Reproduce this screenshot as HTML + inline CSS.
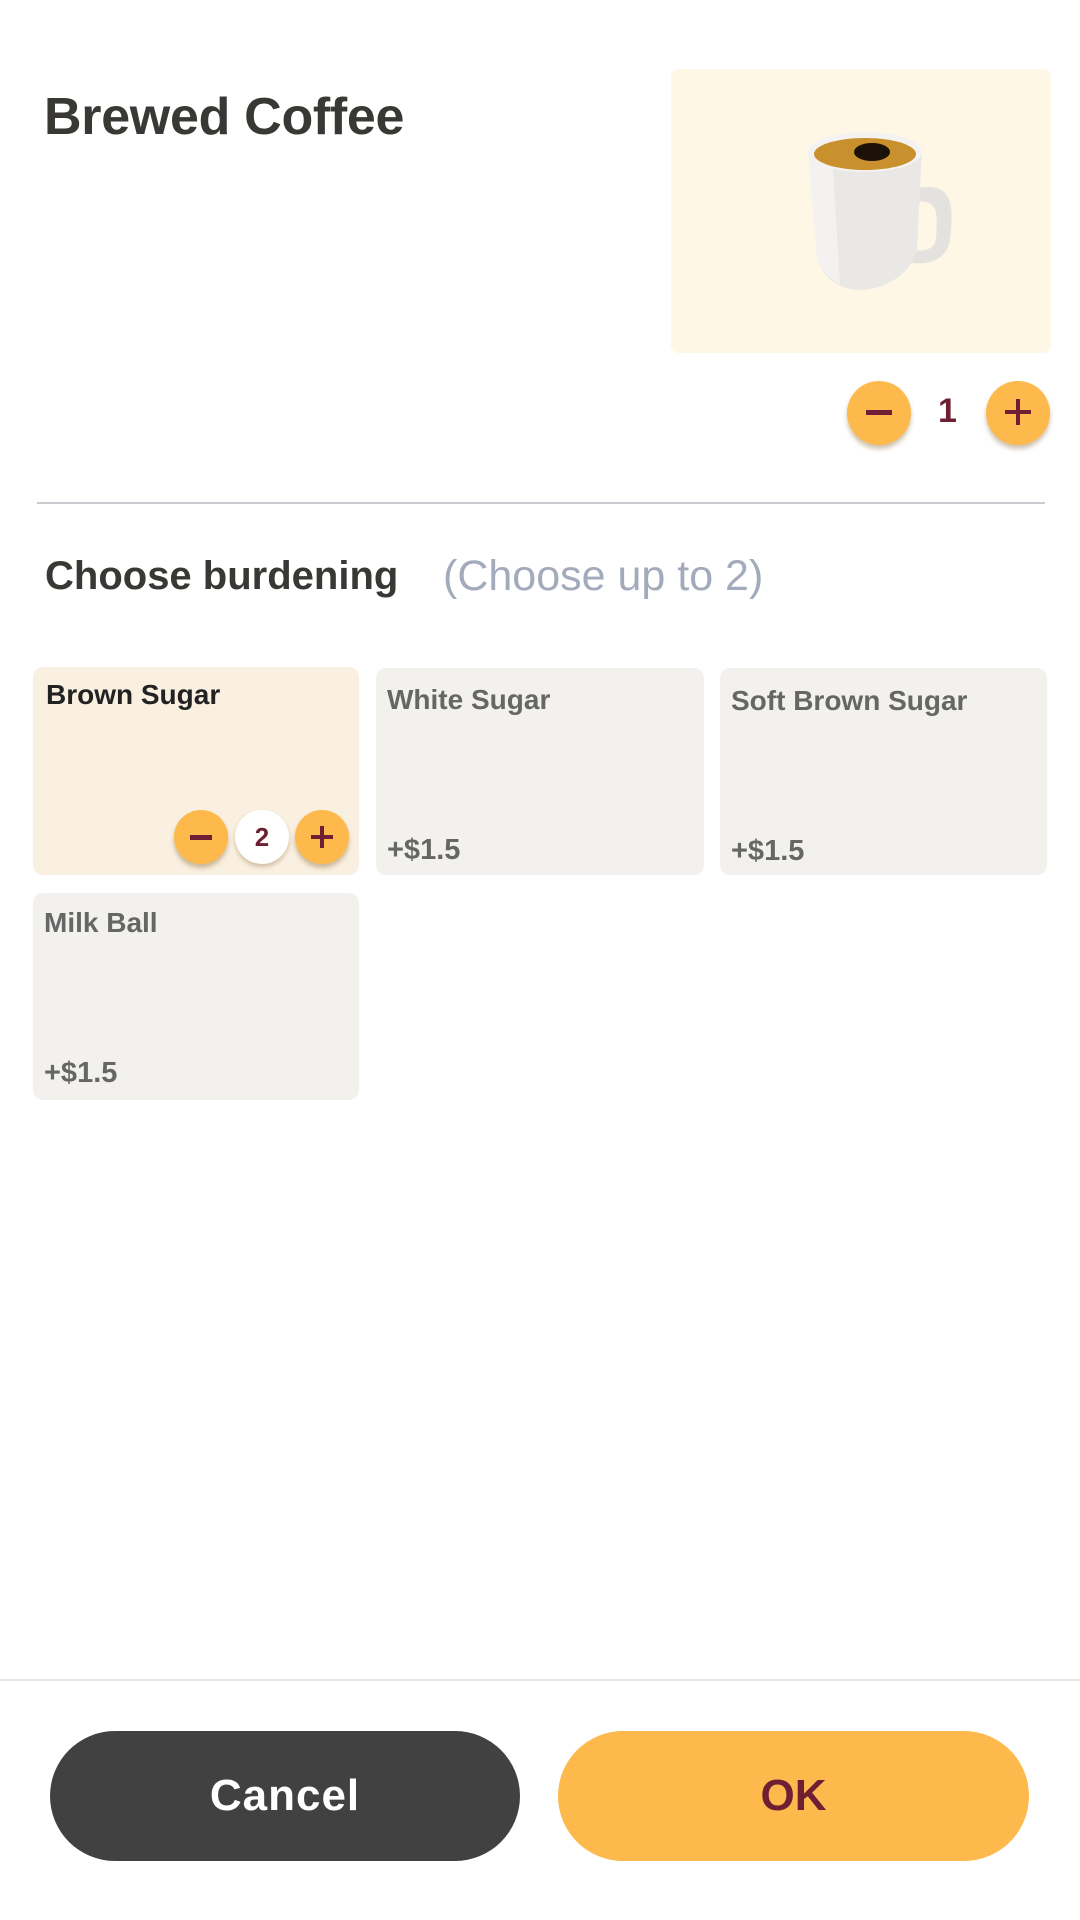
<!DOCTYPE html>
<html><head><meta charset="utf-8"><style>
*{margin:0;padding:0;box-sizing:border-box}
body{width:1080px;height:1920px;background:#fff;position:relative;font-family:"Liberation Sans",sans-serif;overflow:hidden}
.abs{position:absolute}
.circ{position:absolute;border-radius:50%;background:#fdb94b;box-shadow:0 4px 5px rgba(120,80,20,.35)}
.card{position:absolute;border-radius:10px;background:#f3f1ed}
.ct{position:absolute;left:12px;top:14px;font-size:28px;font-weight:bold;color:#666}
.cp{position:absolute;left:12px;font-size:29px;font-weight:bold;color:#666}
</style></head><body>
<div class="abs" style="left:44px;top:87px;font-size:52px;font-weight:bold;color:#3a3835;letter-spacing:-0.3px">Brewed Coffee</div>
<div class="abs" style="left:671px;top:69px;width:380px;height:284px;background:#fff7e6;border-radius:8px"></div>
<svg class="abs" style="left:790px;top:125px" width="180" height="180" viewBox="790 125 180 180">
<path d="M905 190 C950 180 955 195 950 240 C946 262 925 266 905 262 L906 250 C925 252 935 250 936 238 C939 205 935 198 908 203Z" fill="#e4e2de"/>
<path d="M808 152 L922 152 L917 250 C910 275 885 290 857 290 C835 288 822 275 817 258Z" fill="#e9e8e5"/>
<path d="M808 152 L832 154 L840 284 C828 278 820 268 817 258Z" fill="#f3f2f0"/>
<ellipse cx="865" cy="152" rx="57" ry="20" fill="#f4f3f1"/>
<ellipse cx="865" cy="154" rx="51" ry="16" fill="#c8912d"/>
<ellipse cx="872" cy="152" rx="18" ry="9" fill="#1c1208"/>
</svg>
<div class="circ" style="left:847px;top:381px;width:64px;height:64px"></div>
<div class="abs" style="left:866px;top:410px;width:26px;height:5px;background:#6e1f33"></div>
<div class="abs" style="left:920px;top:392px;width:55px;text-align:center;font-size:34px;font-weight:bold;color:#6e1f33">1</div>
<div class="circ" style="left:986px;top:381px;width:64px;height:64px"></div>
<div class="abs" style="left:1005px;top:410px;width:26px;height:4px;background:#6e1f33"></div>
<div class="abs" style="left:1016px;top:399px;width:4px;height:26px;background:#6e1f33"></div>
<div class="abs" style="left:37px;top:502px;width:1008px;height:2px;background:#c9cbd0"></div>
<div class="abs" style="left:45px;top:554px;font-size:40px;font-weight:bold;color:#3a3835">Choose burdening</div>
<div class="abs" style="left:443px;top:552px;font-size:43px;color:#a3aabb">(Choose up to 2)</div>
<div class="card" style="left:33px;top:667px;width:326px;height:208px;background:#faf0e1">
<div class="ct" style="left:13px;top:12px;color:#222">Brown Sugar</div></div>
<div class="circ" style="left:174px;top:810px;width:54px;height:54px"></div>
<div class="abs" style="left:190px;top:835px;width:22px;height:5px;background:#6e1f33"></div>
<div class="circ" style="left:235px;top:810px;width:54px;height:54px;background:#fff;box-shadow:0 3px 4px rgba(120,80,20,.3)"></div>
<div class="abs" style="left:235px;top:822px;width:54px;text-align:center;font-size:26px;font-weight:bold;color:#6e1f33">2</div>
<div class="circ" style="left:295px;top:810px;width:54px;height:54px"></div>
<div class="abs" style="left:311px;top:835px;width:22px;height:4px;background:#6e1f33"></div>
<div class="abs" style="left:320px;top:826px;width:4px;height:22px;background:#6e1f33"></div>
<div class="card" style="left:376px;top:668px;width:328px;height:207px"><div class="ct" style="left:11px;top:16px">White Sugar</div><div class="cp" style="left:11px;top:166px">+$1.5</div></div>
<div class="card" style="left:720px;top:668px;width:327px;height:207px"><div class="ct" style="left:11px;top:17px">Soft Brown Sugar</div><div class="cp" style="left:11px;top:167px">+$1.5</div></div>
<div class="card" style="left:33px;top:893px;width:326px;height:207px"><div class="ct" style="left:11px;top:14px">Milk Ball</div><div class="cp" style="left:11px;top:164px">+$1.5</div></div>
<div class="abs" style="left:0;top:1679px;width:1080px;height:2px;background:#e6e6e6"></div>
<div class="abs" style="left:50px;top:1731px;width:470px;height:130px;border-radius:65px;background:#414141;color:#fff;font-size:44px;font-weight:bold;text-align:center;line-height:130px;letter-spacing:1px">Cancel</div>
<div class="abs" style="left:558px;top:1731px;width:471px;height:130px;border-radius:65px;background:#fdb94b;color:#6e1f33;font-size:44px;font-weight:bold;text-align:center;line-height:130px">OK</div>
</body></html>
